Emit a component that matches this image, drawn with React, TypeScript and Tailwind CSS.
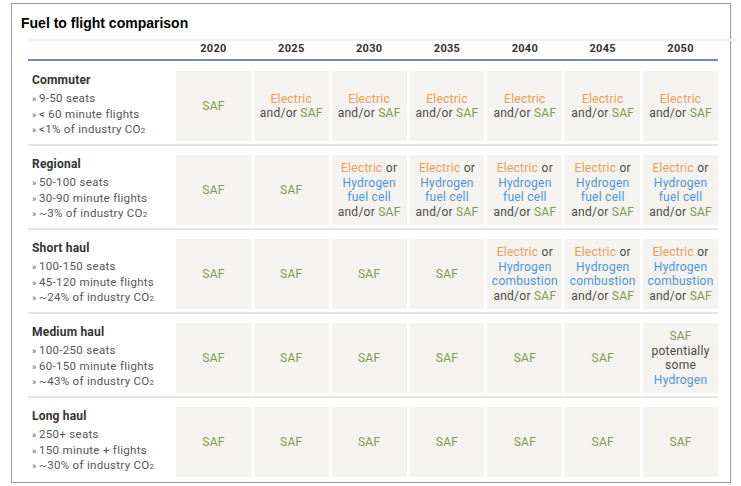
import React from 'react';

const years = ['2020', '2025', '2030', '2035', '2040', '2045', '2050'];

type Part = { t: string; c: 'saf' | 'el' | 'hy' | 'tx' };
type Cell = Part[][];

const saf: Cell = [[{ t: 'SAF', c: 'saf' }]];
const elSaf: Cell = [[{ t: 'Electric', c: 'el' }], [{ t: 'and/or ', c: 'tx' }, { t: 'SAF', c: 'saf' }]];
const elFuel: Cell = [
  [{ t: 'Electric', c: 'el' }, { t: ' or', c: 'tx' }],
  [{ t: 'Hydrogen', c: 'hy' }],
  [{ t: 'fuel cell', c: 'hy' }],
  [{ t: 'and/or ', c: 'tx' }, { t: 'SAF', c: 'saf' }],
];
const elComb: Cell = [
  [{ t: 'Electric', c: 'el' }, { t: ' or', c: 'tx' }],
  [{ t: 'Hydrogen', c: 'hy' }],
  [{ t: 'combustion', c: 'hy' }],
  [{ t: 'and/or ', c: 'tx' }, { t: 'SAF', c: 'saf' }],
];
const safSome: Cell = [
  [{ t: 'SAF', c: 'saf' }],
  [{ t: 'potentially', c: 'tx' }],
  [{ t: 'some', c: 'tx' }],
  [{ t: 'Hydrogen', c: 'hy' }],
];

const rows = [
  {
    name: 'Commuter',
    bullets: ['9-50 seats', '< 60 minute flights', '<1% of industry CO'],
    cells: [saf, elSaf, elSaf, elSaf, elSaf, elSaf, elSaf],
  },
  {
    name: 'Regional',
    bullets: ['50-100 seats', '30-90 minute flights', '~3% of industry CO'],
    cells: [saf, saf, elFuel, elFuel, elFuel, elFuel, elFuel],
  },
  {
    name: 'Short haul',
    bullets: ['100-150 seats', '45-120 minute flights', '~24% of industry CO'],
    cells: [saf, saf, saf, saf, elComb, elComb, elComb],
  },
  {
    name: 'Medium haul',
    bullets: ['100-250 seats', '60-150 minute flights', '~43% of industry CO'],
    cells: [saf, saf, saf, saf, saf, saf, safSome],
  },
  {
    name: 'Long haul',
    bullets: ['250+ seats', '150 minute + flights', '~30% of industry CO'],
    cells: [saf, saf, saf, saf, saf, saf, saf],
  },
];

const colorOf = {
  saf: 'text-[#7f9b52]',
  el: 'text-[#ee9d4f]',
  hy: 'text-[#4f95d6]',
  tx: 'text-[#4a4a4a]',
};

function FuelCell({ cell }: { cell: Cell }) {
  return (
    <div className="h-[70px] bg-[#f4f3ef] flex flex-col items-center justify-center text-center text-[12px] leading-[14.5px] tracking-[0.25px]">
      {cell.map((line, i) => (
        <div key={i} className="whitespace-pre">
          {line.map((p, j) => (
            <span key={j} className={colorOf[p.c]}>
              {p.t}
            </span>
          ))}
        </div>
      ))}
    </div>
  );
}

export default function App() {
  return (
    <div className="w-[741px] h-[486px] bg-white pt-[3px] pl-[11px]">
      <div className="w-[720px] h-[480px] border border-[#9a9a9a] flex flex-col">
        <h1 className="pl-[9px] pt-[11px] h-[35px] text-[14px] leading-[16px] font-bold text-black font-['Liberation_Sans',Arial,sans-serif]">
          Fuel to flight comparison
        </h1>

        <div className="pl-[16px] pr-[2px] font-['Roboto',sans-serif]">
          <div className="border-t-2 border-[#f1f1f1] mr-[-9px]" />
          <div className="flex w-[690px] border-b-2 border-[#6d8bc6] h-[20px]">
            <div className="w-[148px]" />
            <div className="flex-1 grid grid-cols-7 gap-[3px]">
              {years.map(y => (
                <div key={y} className="text-center text-[11px] leading-[15px] font-bold text-[#333] tracking-[0.3px]">
                  {y}
                </div>
              ))}
            </div>
          </div>

          <div className="pt-[1px]">
            {rows.map((row, ri) => (
              <div
                key={row.name}
                className={`flex w-[690px] pt-[9px] pb-[3px] ${ri < rows.length - 1 ? 'border-b-2 border-[#e4e4e4]' : ''}`}
              >
                <div className="w-[148px] pl-[4px] pt-[1px]">
                  <div className="text-[12px] leading-[16px] font-bold text-[#333] tracking-[0.2px]">{row.name}</div>
                  <div className="mt-[3px] text-[11.5px] leading-[14.5px] text-[#555] tracking-[0.3px]">
                    {row.bullets.map(b => (
                      <div key={b} className="whitespace-pre">
                        <span className="text-[9px]">» </span>
                        {b}
                        {b.endsWith('CO') && <span className="text-[8px]">2</span>}
                      </div>
                    ))}
                  </div>
                </div>
                <div className="flex-1 grid grid-cols-7 gap-[3px]">
                  {row.cells.map((c, ci) => (
                    <FuelCell key={ci} cell={c} />
                  ))}
                </div>
              </div>
            ))}
          </div>
        </div>
      </div>
    </div>
  );
}
